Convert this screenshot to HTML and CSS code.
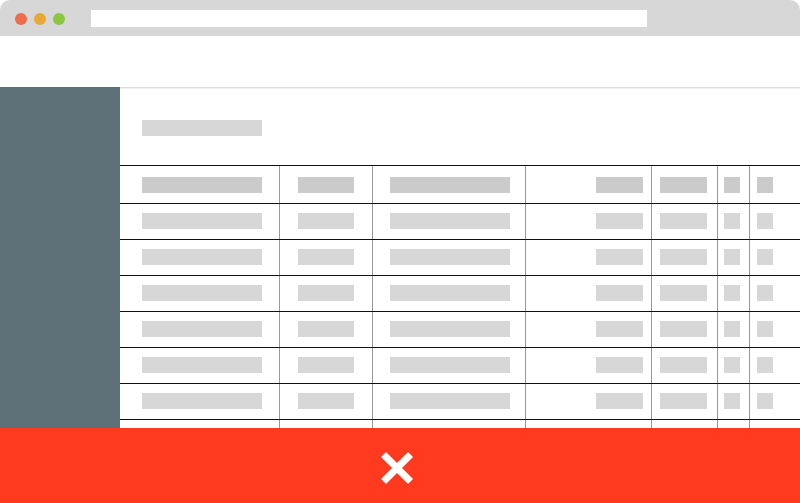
FILE: index.html
```html
<!DOCTYPE html>
<html lang="en">
<head>
<meta charset="utf-8">
<title>Table placeholder</title>
<link rel="stylesheet" href="styles.css">
</head>
<body>
<div class="window">
  <div class="chrome">
    <span class="dot dot-red"></span>
    <span class="dot dot-yellow"></span>
    <span class="dot dot-green"></span>
    <span class="address"></span>
  </div>
  <div class="appbar"></div>
  <div class="layout">
    <aside class="sidebar"></aside>
    <main class="main">
      <div class="title-bar"></div>
      <div class="table">
        <div class="row row-head">
          <div class="cell c1"><span class="bar w120"></span></div>
          <div class="cell c2"><span class="bar w56"></span></div>
          <div class="cell c3"><span class="bar w120"></span></div>
          <div class="cell c4"><span class="bar w47"></span></div>
          <div class="cell c5"><span class="bar w47"></span></div>
          <div class="cell c6"><span class="bar w16"></span></div>
          <div class="cell c7"><span class="bar w16"></span></div>
        </div>
        <div class="row">
          <div class="cell c1"><span class="bar w120"></span></div>
          <div class="cell c2"><span class="bar w56"></span></div>
          <div class="cell c3"><span class="bar w120"></span></div>
          <div class="cell c4"><span class="bar w47"></span></div>
          <div class="cell c5"><span class="bar w47"></span></div>
          <div class="cell c6"><span class="bar w16"></span></div>
          <div class="cell c7"><span class="bar w16"></span></div>
        </div>
        <div class="row">
          <div class="cell c1"><span class="bar w120"></span></div>
          <div class="cell c2"><span class="bar w56"></span></div>
          <div class="cell c3"><span class="bar w120"></span></div>
          <div class="cell c4"><span class="bar w47"></span></div>
          <div class="cell c5"><span class="bar w47"></span></div>
          <div class="cell c6"><span class="bar w16"></span></div>
          <div class="cell c7"><span class="bar w16"></span></div>
        </div>
        <div class="row">
          <div class="cell c1"><span class="bar w120"></span></div>
          <div class="cell c2"><span class="bar w56"></span></div>
          <div class="cell c3"><span class="bar w120"></span></div>
          <div class="cell c4"><span class="bar w47"></span></div>
          <div class="cell c5"><span class="bar w47"></span></div>
          <div class="cell c6"><span class="bar w16"></span></div>
          <div class="cell c7"><span class="bar w16"></span></div>
        </div>
        <div class="row">
          <div class="cell c1"><span class="bar w120"></span></div>
          <div class="cell c2"><span class="bar w56"></span></div>
          <div class="cell c3"><span class="bar w120"></span></div>
          <div class="cell c4"><span class="bar w47"></span></div>
          <div class="cell c5"><span class="bar w47"></span></div>
          <div class="cell c6"><span class="bar w16"></span></div>
          <div class="cell c7"><span class="bar w16"></span></div>
        </div>
        <div class="row">
          <div class="cell c1"><span class="bar w120"></span></div>
          <div class="cell c2"><span class="bar w56"></span></div>
          <div class="cell c3"><span class="bar w120"></span></div>
          <div class="cell c4"><span class="bar w47"></span></div>
          <div class="cell c5"><span class="bar w47"></span></div>
          <div class="cell c6"><span class="bar w16"></span></div>
          <div class="cell c7"><span class="bar w16"></span></div>
        </div>
        <div class="row">
          <div class="cell c1"><span class="bar w120"></span></div>
          <div class="cell c2"><span class="bar w56"></span></div>
          <div class="cell c3"><span class="bar w120"></span></div>
          <div class="cell c4"><span class="bar w47"></span></div>
          <div class="cell c5"><span class="bar w47"></span></div>
          <div class="cell c6"><span class="bar w16"></span></div>
          <div class="cell c7"><span class="bar w16"></span></div>
        </div>
        <div class="row">
          <div class="cell c1"><span class="bar w120"></span></div>
          <div class="cell c2"><span class="bar w56"></span></div>
          <div class="cell c3"><span class="bar w120"></span></div>
          <div class="cell c4"><span class="bar w47"></span></div>
          <div class="cell c5"><span class="bar w47"></span></div>
          <div class="cell c6"><span class="bar w16"></span></div>
          <div class="cell c7"><span class="bar w16"></span></div>
        </div>
      </div>
    </main>
  </div>
  <div class="error-banner">
    <svg class="close-icon" width="32" height="32" viewBox="0 0 32 32" aria-hidden="true">
      <line x1="2.5" y1="2.5" x2="29.5" y2="29.5" stroke="#ffffff" stroke-width="7"/>
      <line x1="29.5" y1="2.5" x2="2.5" y2="29.5" stroke="#ffffff" stroke-width="7"/>
    </svg>
  </div>
</div>
</body>
</html>
```

FILE: styles.css
```css
html, body {
  margin: 0;
  padding: 0;
  background: #ffffff;
  font-family: "Liberation Sans", Arial, sans-serif;
}

.window {
  width: 800px;
  height: 503px;
  overflow: hidden;
  display: flex;
  flex-direction: column;
}

.chrome {
  height: 36px;
  flex: 0 0 36px;
  background: #d7d7d7;
  border-radius: 10px 10px 0 0;
  display: flex;
  align-items: center;
  padding-left: 15px;
  box-sizing: border-box;
}

.dot {
  width: 12px;
  height: 12px;
  border-radius: 50%;
  margin-right: 7px;
  margin-top: 1px;
}

.dot-red { background: #ee6d4c; }
.dot-yellow { background: #eaa936; }
.dot-green { background: #8ac63e; margin-right: 26px; }

.address {
  width: 556px;
  height: 17px;
  background: #ffffff;
}

.appbar {
  height: 51px;
  flex: 0 0 51px;
  background: #ffffff;
}

.layout {
  flex: 1;
  display: flex;
  min-height: 0;
}

.sidebar {
  width: 120px;
  flex: 0 0 120px;
  background: #5e7178;
}

.main {
  flex: 1;
  overflow: hidden;
  padding-top: 33px;
  box-shadow: inset 0 1px 0 #dcdcdc, inset 0 2px 0 #eeeeee;
}

.title-bar {
  width: 120px;
  height: 16px;
  margin-left: 22px;
  background: #d7d7d7;
}

.table {
  margin-top: 29px;
}

.row {
  display: grid;
  grid-template-columns: 160px 93px 153px 126px 66px 32px 50px;
  height: 36px;
  border-top: 1px solid #111111;
  box-sizing: border-box;
}

.row-head {
  height: 38px;
}

.cell {
  border-right: 1px solid #999999;
  padding-top: 9px;
  box-sizing: border-box;
  display: flex;
  align-items: flex-start;
}

.row-head .cell {
  padding-top: 11px;
}

.c1 { padding-left: 22px; }
.c2 { padding-left: 18px; }
.c3 { padding-left: 17px; }
.c4 { justify-content: flex-end; padding-right: 8px; }
.c5 { padding-left: 8px; }
.c6 { padding-left: 6px; }
.c7 { padding-left: 7px; border-right: none; }

.bar {
  display: block;
  height: 16px;
  background: #d7d7d7;
}

.row-head .bar {
  background: #cbcbcb;
}

.w120 { width: 120px; }
.w56 { width: 56px; }
.w47 { width: 47px; }
.w16 { width: 16px; }

.error-banner {
  position: fixed;
  left: 0;
  bottom: 0;
  width: 800px;
  height: 75px;
  background: #ff3a1e;
  display: flex;
  align-items: center;
  justify-content: center;
  padding-top: 5px;
  padding-right: 6px;
  box-sizing: border-box;
}

.close-icon {
  display: block;
}
```
